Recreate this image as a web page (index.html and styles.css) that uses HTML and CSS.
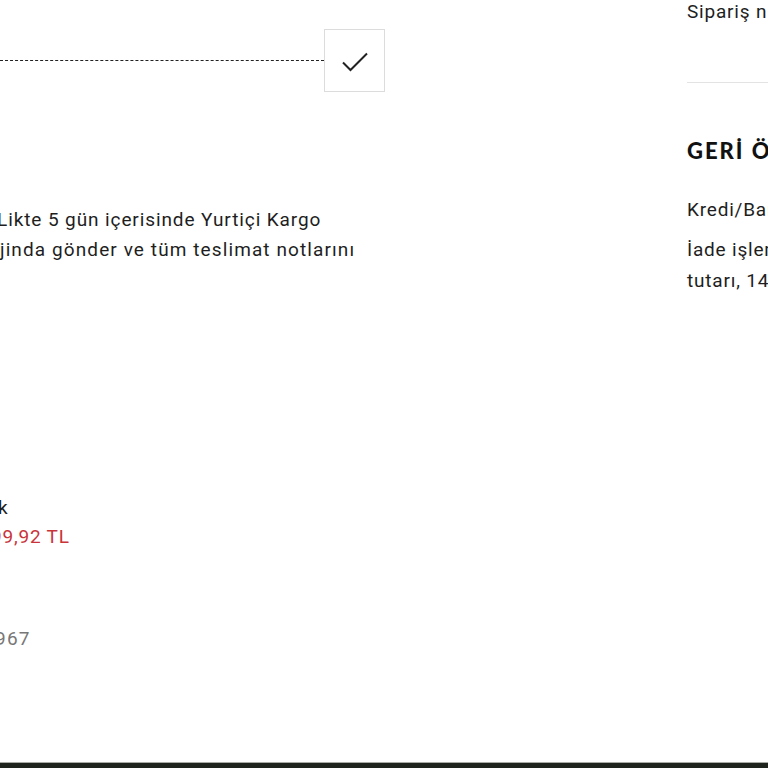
FILE: index.html
```html
<!DOCTYPE html>
<html lang="tr">
<head>
<meta charset="utf-8">
<title>Sipariş</title>
<link rel="stylesheet" href="styles.css">
</head>
<body>
<div class="page">
  <main class="left">
    <div class="confirm-row">
      <div class="dash"></div>
      <div class="check-box">
        <svg width="28" height="24" viewBox="0 0 28 24"><path d="M2 12.5 L9.5 20 L26 3.5" fill="none" stroke="#222" stroke-width="2"/></svg>
      </div>
    </div>
    <p class="info">Likte 5 gün içerisinde Yurtiçi Kargo<br><span class="info-second">jinda gönder ve tüm teslimat notlarını</span></p>
    <div class="price">
      <div class="price-label">k</div>
      <div class="price-value">99,92 TL</div>
    </div>
    <div class="code">967</div>
  </main>
  <aside class="right">
    <div class="order-no">Sipariş numarası</div>
    <hr class="divider">
    <h2 class="refund-title">GERİ ÖDEME</h2>
    <p class="refund-line">Kredi/Banka kartı ile ödeme</p>
    <p class="refund-text">İade işlemi onaylandığında<br>tutarı, 14 gün içerisinde</p>
  </aside>
</div>
<footer class="footer"></footer>
</body>
</html>
```

FILE: styles.css
```css
html, body {
  margin: 0;
  padding: 0;
  width: 768px;
  height: 768px;
  overflow: hidden;
  background: #fff;
}
body {
  font-family: Roboto, "Liberation Sans", sans-serif;
  color: #1e1e1e;
  font-size: 19px;
  letter-spacing: 0.8px;
}
.page {
  display: flex;
  height: 762px;
  overflow: hidden;
}
.left {
  width: 385px;
  flex: none;
  overflow: hidden;
}
.confirm-row {
  display: flex;
  align-items: center;
  margin-top: 29px;
}
.dash {
  flex: 1;
  border-top: 1px dashed #222;
}
.check-box {
  width: 59px;
  height: 61px;
  border: 1px solid #dcdcdc;
  display: flex;
  align-items: center;
  justify-content: center;
  flex: none;
}
.check-box svg {
  margin-top: 2px;
}
.info {
  margin: 113px 0 0 -3px;
  line-height: 30px;
  letter-spacing: 0.9px;
  white-space: nowrap;
}
.info-second {
  margin-left: 3px;
  letter-spacing: 1.1px;
}
.price {
  margin: 228px 0 0 -2px;
  line-height: 29px;
}
.price-value {
  color: #c9343b;
  margin-left: -7px;
}
.code {
  margin: 73px 0 0 -5px;
  line-height: 29px;
  color: #777;
  letter-spacing: 1.2px;
}
.right {
  margin-left: 302px;
  flex: none;
  width: 300px;
  white-space: nowrap;
}
.order-no {
  margin-top: -3px;
  line-height: 30px;
}
.divider {
  border: 0;
  border-top: 1px solid #e3e3e3;
  margin: 55px 0 0 0;
}
.refund-title {
  font-family: Lato, sans-serif;
  font-weight: 900;
  font-size: 22px;
  letter-spacing: 2px;
  line-height: 28px;
  margin: 54px 0 0 0;
  color: #111;
}
.refund-line {
  margin: 30px 0 0 0;
  line-height: 30px;
}
.refund-text {
  margin: 9px 0 0 0;
  line-height: 31px;
}
.footer {
  height: 5px;
  border-top: 1px solid #a9aba6;
  background: #1f241d;
}
```
